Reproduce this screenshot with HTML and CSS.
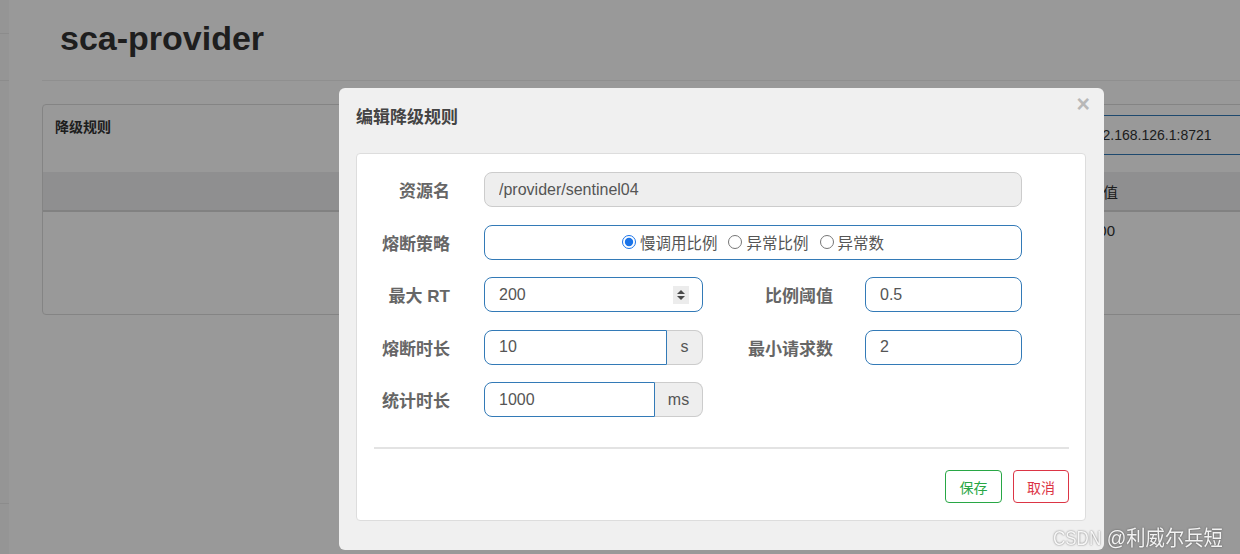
FILE: index.html
```html
<!DOCTYPE html>
<html lang="zh">
<head>
<meta charset="utf-8">
<title>sca-provider</title>
<link rel="stylesheet" href="styles.css">
</head>
<body>
<div class="page">
  <aside class="sidebar">
    <div class="nav-item nav-a"></div>
    <div class="nav-item nav-b"></div>
    <div class="nav-item nav-c"></div>
  </aside>
  <main class="main">
    <h1 class="app-title">sca-provider</h1>
    <hr class="title-rule">
    <section class="panel">
      <div class="panel-head">
        <span class="panel-title">降级规则</span>
        <input class="search" type="text" value="192.168.126.1:8721">
      </div>
      <div class="table-head">
        <span class="th th-hidden">资源名</span>
        <span class="th">阈值</span>
      </div>
      <div class="table-body">
        <div class="table-row">
          <span class="td th-hidden">/provider/sentinel04</span>
          <span class="td td-num">200</span>
        </div>
      </div>
    </section>
  </main>
</div>

<div class="backdrop"></div>

<div class="modal">
  <div class="modal-header">
    <h4 class="modal-title">编辑降级规则</h4>
    <button class="close" type="button">×</button>
  </div>
  <div class="modal-body">
    <div class="form-card">
      <div class="form-row">
        <label class="label">资源名</label>
        <input class="input input-full input-disabled" type="text" value="/provider/sentinel04" disabled>
      </div>
      <div class="form-row">
        <label class="label">熔断策略</label>
        <div class="input input-full radio-box">
          <label class="radio"><input type="radio" name="grade" checked>慢调用比例</label>
          <label class="radio"><input type="radio" name="grade">异常比例</label>
          <label class="radio"><input type="radio" name="grade">异常数</label>
        </div>
      </div>
      <div class="form-row">
        <label class="label">最大 RT</label>
        <div class="input num-box">
          <input class="bare" type="text" value="200">
          <span class="spinner">
            <svg width="16" height="18" viewBox="0 0 16 18"><path d="M4 8 L8 4 L12 8 Z" fill="#4a4a4a"/><path d="M4 10 L8 14 L12 10 Z" fill="#4a4a4a"/></svg>
          </span>
        </div>
        <label class="label label-right">比例阈值</label>
        <input class="input input-small" type="text" value="0.5">
      </div>
      <div class="form-row">
        <label class="label">熔断时长</label>
        <div class="input-group">
          <input class="input group-input" type="text" value="10">
          <span class="addon addon-s">s</span>
        </div>
        <label class="label label-right">最小请求数</label>
        <input class="input input-small" type="text" value="2">
      </div>
      <div class="form-row">
        <label class="label">统计时长</label>
        <div class="input-group">
          <input class="input group-input" type="text" value="1000">
          <span class="addon addon-ms">ms</span>
        </div>
      </div>
      <div class="divider"></div>
      <div class="actions">
        <button class="btn btn-save" type="button">保存</button>
        <button class="btn btn-cancel" type="button">取消</button>
      </div>
    </div>
  </div>
</div>

<div class="watermark"><span class="wm-latin">CSDN</span> @利威尔兵短</div>
</body>
</html>
```

FILE: styles.css
```css
* { box-sizing: border-box; }

html, body {
  margin: 0;
  padding: 0;
}

body {
  width: 1240px;
  height: 554px;
  overflow: hidden;
  background: #fff;
  font-family: "Liberation Sans", "Noto Sans CJK SC", sans-serif;
  color: #333;
}

.page {
  display: flex;
  width: 1320px;
  height: 554px;
}

/* ---------- underlying page ---------- */
.sidebar {
  width: 9px;
  flex-shrink: 0;
  background: #f9f9f9;
}
.nav-item { border-bottom: 1px solid #e9e9e9; }
.nav-a { height: 34px; }
.nav-b { height: 47px; }
.nav-c { height: 423px; }

.main {
  flex: 1;
  padding-left: 33px;
}

.app-title {
  margin: 0;
  padding: 19px 0 0 18px;
  font-size: 34px;
  line-height: 39px;
  font-weight: bold;
  color: #333;
}

.title-rule {
  margin: 22px 0 0 0;
  border: 0;
  border-top: 1px solid #eee;
  height: 0;
}

.panel {
  margin-top: 23px;
  border: 1px solid #ddd;
  border-radius: 4px;
}

.panel-head {
  height: 67px;
  padding: 10px 0 0 12px;
  display: grid;
  grid-template-columns: 1019px 300px;
  align-items: start;
}

.panel-title {
  font-size: 14px;
  line-height: 24px;
  font-weight: bold;
  color: #333;
}

.search {
  height: 40px;
  border: 1px solid #337ab7;
  border-radius: 4px;
  padding: 0 12px;
  font: 14px "Liberation Sans", sans-serif;
  color: #333;
  background: #fff;
}

.table-head {
  height: 40px;
  background: #eeeff1;
  border-bottom: 2px solid #d8d8d8;
  display: grid;
  grid-template-columns: 1033px 120px;
  padding-left: 12px;
  align-items: center;
}

.th {
  font-size: 15px;
  color: #333;
}

.th-hidden { visibility: hidden; }

.table-body { height: 102px; }

.table-row {
  display: grid;
  grid-template-columns: 1035px 120px;
  padding-left: 12px;
  height: 37px;
  align-items: center;
  font-size: 15px;
  color: #333;
}

/* ---------- backdrop ---------- */
.backdrop {
  position: fixed;
  inset: 0;
  background: rgba(0, 0, 0, 0.4);
}

/* ---------- modal ---------- */
.modal {
  position: fixed;
  left: 339px;
  top: 88px;
  width: 765px;
  height: 462px;
  background: #f0f0f0;
  border-radius: 6px;
  font-family: "Liberation Sans", "Noto Sans CJK SC", sans-serif;
}

.modal-header {
  height: 65px;
  display: flex;
  justify-content: space-between;
  align-items: flex-start;
  padding: 0 14px 0 17px;
}

.modal-title {
  margin: 18px 0 0 0;
  font-size: 17px;
  line-height: 24px;
  font-weight: bold;
  color: #444;
}

.close {
  margin-top: 5px;
  padding: 0;
  border: 0;
  background: transparent;
  font: bold 23px/23px "Liberation Sans", sans-serif;
  color: #b8b8b8;
}

.modal-body {
  padding: 0 18px 29px 17px;
}

.form-card {
  background: #fff;
  border: 1px solid #ddd;
  border-radius: 4px;
  padding: 18px 16px 17px 17px;
}

.form-row {
  display: flex;
  align-items: center;
  height: 35px;
  margin-bottom: 17.5px;
}
.form-row:nth-child(5) { margin-bottom: 0; }

.label {
  width: 76px;
  margin-right: 34px;
  flex-shrink: 0;
  text-align: right;
  font-size: 17px;
  font-weight: bold;
  color: #666;
  white-space: nowrap;
}

.label-right {
  width: 130px;
  margin-right: 32px;
}

.input {
  height: 35px;
  border: 1px solid #337ab7;
  border-radius: 8px;
  padding: 0 14px;
  font: 16px "Liberation Sans", "Noto Sans CJK SC", sans-serif;
  color: #555;
  background: #fff;
  outline: none;
}

.input-full { width: 538px; }
.input-small { width: 157px; }

.input-disabled {
  background: #eee;
  border-color: #ccc;
  color: #555;
}

.radio-box {
  display: flex;
  justify-content: center;
  align-items: center;
  gap: 11px;
  padding: 0;
}

.radio {
  display: flex;
  align-items: center;
  font-size: 15.5px;
  color: #555;
  white-space: nowrap;
}

.radio input {
  margin: 0 4px 0 0;
  width: 14px;
  height: 14px;
  accent-color: #1a73e8;
}

.num-box {
  width: 219px;
  display: flex;
  align-items: center;
  padding: 0 13px 0 14px;
}

.bare {
  flex: 1;
  min-width: 0;
  border: 0;
  padding: 0;
  outline: none;
  font: 16px "Liberation Sans", sans-serif;
  color: #555;
  background: transparent;
}

.spinner {
  display: flex;
  width: 16px;
  height: 18px;
  background: #ececec;
}

.input-group {
  display: flex;
  width: 219px;
  height: 35px;
}

.group-input {
  flex: 1;
  min-width: 0;
  border-radius: 8px 0 0 8px;
}

.addon {
  display: flex;
  align-items: center;
  justify-content: center;
  background: #eee;
  border: 1px solid #ccc;
  border-left: 0;
  border-radius: 0 8px 8px 0;
  font-size: 16px;
  color: #555;
}
.addon-s { width: 36px; }
.addon-ms { width: 48px; }

.divider {
  margin-top: 30px;
  height: 2px;
  background: #e3e3e3;
}

.actions {
  margin-top: 21px;
  display: flex;
  justify-content: flex-end;
  gap: 11px;
}

.btn {
  height: 33px;
  border-radius: 4px;
  background: #fff;
  font: 14px "Liberation Sans", "Noto Sans CJK SC", sans-serif;
  padding: 0;
}

.btn-save {
  width: 57px;
  border: 1px solid #28a745;
  color: #28a745;
}

.btn-cancel {
  width: 56px;
  border: 1px solid #dc3545;
  color: #dc3545;
}

/* ---------- watermark ---------- */
.watermark {
  position: fixed;
  left: 1053px;
  top: 525px;
  font-size: 21px;
  line-height: 26px;
  color: rgba(255, 255, 255, 0.92);
  text-shadow: 0 0 2px rgba(60, 60, 60, 0.8);
  white-space: nowrap;
  transform: scaleX(0.92);
  transform-origin: left center;
}

.wm-latin {
  display: inline-block;
  transform: scaleX(0.88);
  transform-origin: left center;
  margin-right: -7px;
}
```
